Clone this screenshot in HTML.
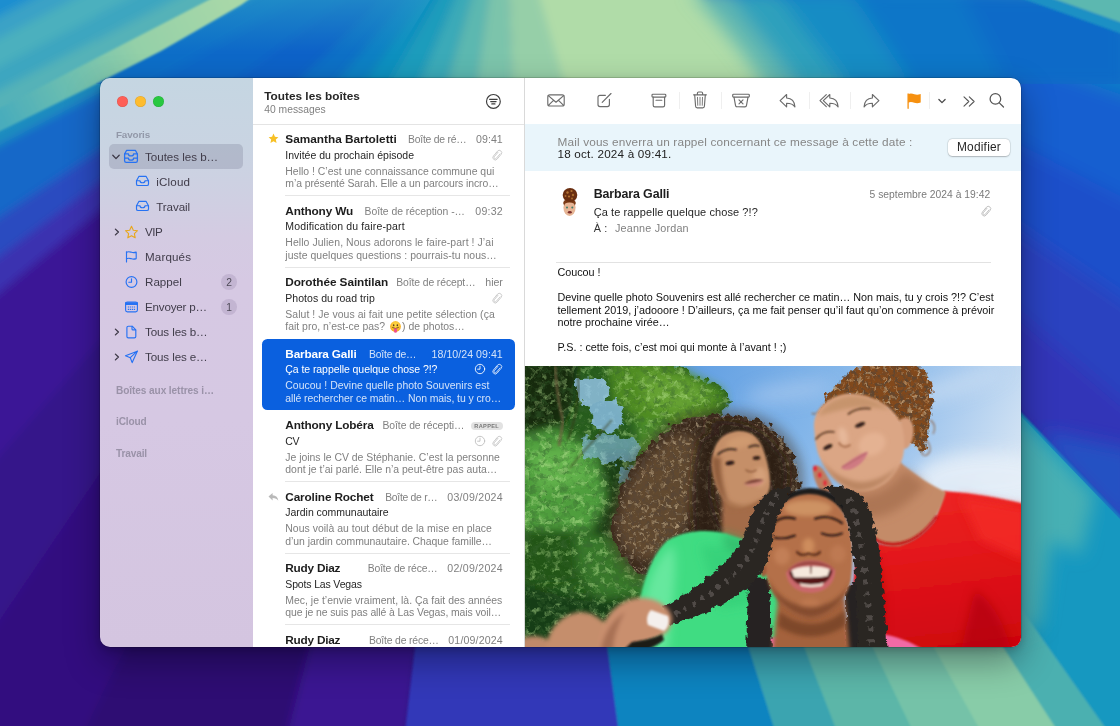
<!DOCTYPE html>
<html lang="fr"><head><meta charset="utf-8"><title>Mail</title>
<style>
html,body{margin:0;padding:0}
body{width:1120px;height:726px;overflow:hidden;position:relative;background:#300d78;font-family:"Liberation Sans",sans-serif;}
.wp{position:absolute;left:0;top:0}
.ui{position:absolute;left:0;top:0;width:1120px;height:726px;will-change:transform;}
.t{position:absolute;white-space:pre;}
.r{position:absolute;}
.i{position:absolute;overflow:visible}
.win{position:absolute;left:100px;top:78px;width:921px;height:569px;border-radius:10px;overflow:hidden;box-shadow:0 0 0 0.5px rgba(0,0,0,.28),0 14px 34px rgba(0,0,20,.38),0 3px 10px rgba(0,0,20,.18);}
.sidebar{position:absolute;left:0;top:0;width:153px;height:569px;background:linear-gradient(180deg,#c5d6e2 0%,#c9d4e2 12%,#ced0e2 20%,#d4cbe2 28%,#d6c9e3 36%,#d6c8e3 60%,#d4c5e0 100%);}
.listbg{position:absolute;left:153px;top:0;width:271px;height:569px;background:#fff;}
.readbg{position:absolute;left:425px;top:0;width:496px;height:569px;background:linear-gradient(180deg,#fff 0,#fff 420px,#cf1414 420px,#cf1414 100%);}
.emo{display:inline-block;vertical-align:-3.5px;margin:0 1.3px 0 1.8px;}
.clipwin{position:absolute;left:100px;top:78px;width:921px;height:569px;border-radius:10px;overflow:hidden;pointer-events:none}
</style></head>
<body>
<svg class="wp" width="1120" height="726" viewBox="0 0 1120 726">
<defs>
<filter id="wb2" x="-5%" y="-5%" width="110%" height="110%"><feGaussianBlur stdDeviation="1.2"/></filter>
<filter id="wb4" x="-5%" y="-5%" width="110%" height="110%"><feGaussianBlur stdDeviation="4"/></filter>
<filter id="wb8" x="-10%" y="-10%" width="120%" height="120%"><feGaussianBlur stdDeviation="9"/></filter>
<filter id="wb16" x="-20%" y="-20%" width="140%" height="140%"><feGaussianBlur stdDeviation="18"/></filter>
</defs>
<rect width="1120" height="726" fill="#2d0b73"/>
<g filter="url(#wb4)">
<polygon points="505,-120 -1070.7,157.8 -1087.2,38.1 -1094.6,-82.5 -1092.8,-203.3 -1082,-323.7 -1062.1,-442.9 -1033.2,-560.3 -995.6,-675.1" fill="#2a98c8" />
<polygon points="505,-120 -956.7,530.8 -1005.7,407.1 -1044.3,279.7 -1072.1,149.6" fill="#4cb0ac" />
<polygon points="505,-120 -907.7,631.2 -934.9,577.6 -960.1,523.1" fill="#1c8cc0" />
<polygon points="505,-120 -821.5,774.7 -868.6,700.5 -911.6,623.7" fill="#1468c8" />
<polygon points="505,-120 -772.8,842.9 -800,805.7 -826.1,767.8" fill="#2a4cc0" />
<polygon points="505,-120 -729.6,897.7 -754.1,867.3 -777.8,836.2" fill="#3a30b0" />
<polygon points="505,-120 -544.7,1087.5 -644,993.5 -734.9,891.2" fill="#3a1896" />
<polygon points="505,-120 -389.7,1206.5 -472.3,1146.8 -551,1082" fill="#36128a" />
<polygon points="505,-120 -196.4,1318.1 -298.6,1263.5 -396.6,1201.8" fill="#33107f" />
<polygon points="505,-120 117.9,1432.5 7.9,1400.8 -99.5,1361.4 -203.9,1314.4" fill="#2d0b73" />
<polygon points="505,-120 323.9,1469.7 216.2,1453.7 109.8,1430.4" fill="#3b1592" />
</g>
<g filter="url(#wb8)">
<polygon points="505,-120 1734.3,904.2 1670.4,976.3 1602.3,1044.4" fill="#3036b8" />
<polygon points="505,-120 1834.6,770.1 1782.8,842.9 1727.1,912.7" fill="#2a42c0" />
<polygon points="505,-120 1933.1,601.4 1883.6,692.1 1828.3,779.3" fill="#1e50ca" />
<polygon points="505,-120 2019.6,395.6 1977.8,505.2 1928.1,611.4" fill="#155ed0" />
<polygon points="505,-120 2065.2,234.5 2043,321 2016,406.2" fill="#0e7cc8" />
<polygon points="505,-120 2098.4,-265 2104.9,-136.8 2101.1,-8.4 2087,119.3 2062.7,245.4" fill="#5cb8b0" />
</g>
<g filter="url(#wb2)">
<polygon points="505,-120 727.7,1464.4 591.5,1477.7 454.7,1479.2 318.3,1469.1" fill="#3038b8" />
<polygon points="505,-120 999.4,1401.7 906.5,1428.8 812.1,1450.2 716.6,1465.9" fill="#0a84c0" />
<polygon points="505,-120 1096.6,1366.6 1043,1386.8 988.8,1405.1" fill="#3aa4b0" />
<polygon points="505,-120 1206.4,1318.1 1146.8,1345.6 1086.2,1370.7" fill="#5cb6a8" />
<polygon points="505,-120 1295.3,1271.2 1246.3,1297.9 1196.3,1322.9" fill="#74c2a8" />
<polygon points="505,-120 1385.8,1215.8 1336.2,1247.1 1285.6,1276.7" fill="#88cca8" />
<polygon points="505,-120 1438.7,1179.3 1407.8,1201 1376.4,1221.9" fill="#4cb0b0" />
<polygon points="505,-120 1618.5,1029 1527,1111 1429.6,1185.8" fill="#1898c0" />
</g>
<clipPath id="cwA"><polygon points="505,-120 1614.4,1032.9 1531.9,1107 1444.3,1175.2 1352.3,1237.2 1256.2,1292.7" fill="#000" /></clipPath>
<clipPath id="cwB"><polygon points="505,-120 2008.5,427.2 1962.7,539.7 1908.4,648.4 1846.1,752.6 1776.1,851.8 1698.7,945.4 1614.4,1032.9" fill="#000" /></clipPath>
<g clip-path="url(#cwA)"><g filter="url(#wb8)">
<polygon points="1000,395 1095,495 1080,555 1052,540 1040,625 1000,640" fill="#4cb2b2" opacity="0.9"/>
</g></g>
<g clip-path="url(#cwB)"><g filter="url(#wb8)">
<polygon points="1135,450 1135,540 1060,460 1040,430" fill="#2258c6" opacity="0.8"/>
</g></g>
<clipPath id="topclip"><rect x="96" y="0" width="1030" height="84"/></clipPath>
<g clip-path="url(#topclip)">
<g filter="url(#wb4)">
<polygon points="505,-120 -31.9,190 -53,150.2 -71.2,108.9 -86.3,66.4 -98.3,23 -107.1,-21.2 -112.6,-66" fill="#0c6ec8"/>
<polygon points="505,-120 9.8,253.1 -12,222.2 -31.9,190" fill="#0b68c8"/>
<polygon points="505,-120 59,310.7 33.5,282.7 9.8,253.1" fill="#0a62c8"/>
<polygon points="505,-120 106.5,354.9 82.2,333.4 59,310.7" fill="#0a70c6"/>
<polygon points="505,-120 149.4,387.9 127.6,371.9 106.5,354.9" fill="#0a80c4"/>
<polygon points="505,-120 195,416.9 171.9,402.9 149.4,387.9" fill="#0c90c0"/>
<polygon points="505,-120 262.7,450.7 228.4,434.9 195,416.9" fill="#1e9cbc"/>
<polygon points="505,-120 334.1,476 298,464.4 262.7,450.7" fill="#3aaab8"/>
<polygon points="505,-120 418.7,494 376.1,486.5 334.1,476" fill="#5cb8b0"/>
<polygon points="505,-120 526.6,499.6 490.6,499.8 454.6,497.9 418.7,494" fill="#7cc4ab"/>
<polygon points="505,-120 675.9,476 626.8,487.9 577,495.8 526.6,499.6" fill="#96cfa8"/>
<polygon points="505,-120 1041.9,190 1013.6,234.6 981.5,276.7 945.9,315.8 907.2,351.8 865.5,384.4 821.2,413.3 774.6,438.3 726.1,459.2 675.9,476" fill="#b0dca8"/>
</g>
<defs><linearGradient id="tg" gradientUnits="userSpaceOnUse" x1="0" y1="0" x2="0" y2="52"><stop offset="0" stop-color="#2a9cc8" stop-opacity="0.6"/><stop offset="1" stop-color="#2a9cc8" stop-opacity="0"/></linearGradient></defs>
<polygon points="96,0 430,0 398,52 96,52" fill="url(#tg)"/>
<g filter="url(#wb8)">
<path d="M690,-10 C715,20 740,45 768,90 L1130,90 L1130,-10 Z" fill="#62b8b0"/>
<path d="M725,-10 C745,20 770,45 800,90 L1130,90 L1130,-10 Z" fill="#2ea0bc"/>
<path d="M775,-10 C795,20 820,50 850,90 L1130,90 L1130,-10 Z" fill="#158cc4"/>
<path d="M850,-10 C870,20 890,50 915,90 L1130,90 L1130,-10 Z" fill="#0c76c8"/>
<path d="M960,-10 L1010,90 L1130,90 L1130,-10 Z" fill="#0a6ac8"/>
</g>
<g filter="url(#wb2)">
<polygon points="1042,-5 1125,24 1125,-5" fill="#5cb8b0"/>
<polygon points="1012,-5 1125,35 1125,24 1042,-5" fill="#1a90c4"/>
</g>
</g>
<g filter="url(#wb4)">
<polygon points="-10,-194.8 330,-371.6 330,-155.6 -10,21.2" fill="#1e8ed0" opacity="1"/>
<polygon points="-10,21.2 330,-155.6 330,-133.6 -10,43.2" fill="#3aa2c6" opacity="1"/>
<polygon points="-10,43.2 330,-133.6 330,-105.6 -10,71.2" fill="#4cb0be" opacity="1"/>
<polygon points="-10,71.2 330,-105.6 330,-81.6 -10,95.2" fill="#3ea6c0" opacity="1"/>
<polygon points="-10,95.2 330,-81.6 330,-46.6 -10,130.2" fill="#54b2b8" opacity="1"/>
</g>
<defs><linearGradient id="gb" gradientUnits="userSpaceOnUse" x1="0" y1="120" x2="230" y2="0"><stop offset="0" stop-color="#48acbc"/><stop offset="0.3" stop-color="#6cbeb0"/><stop offset="0.6" stop-color="#94d0a8"/><stop offset="1" stop-color="#a8d8a8"/></linearGradient></defs>
<g filter="url(#wb2)">
<path d="M-10,136 L88,88 L161,51 L241,5 L262,-10 L228,-10 L-10,113 Z" fill="url(#gb)"/>
</g>
</svg>
<div class="ui">
<div class="win">
<div class="sidebar"></div>
<div class="listbg"></div>
<div class="readbg"></div>
</div>
<div class="r" style="left:117.3px;top:95.5px;width:11px;height:11px;background:#fe5f57;border-radius:50%;box-shadow:inset 0 0 0 0.5px rgba(0,0,0,.12);"></div>
<div class="r" style="left:135.1px;top:95.5px;width:11px;height:11px;background:#febc2e;border-radius:50%;box-shadow:inset 0 0 0 0.5px rgba(0,0,0,.12);"></div>
<div class="r" style="left:152.9px;top:95.5px;width:11px;height:11px;background:#28c840;border-radius:50%;box-shadow:inset 0 0 0 0.5px rgba(0,0,0,.12);"></div>
<div class="t" style="left:116px;top:128.5px;font-size:9.9px;line-height:12px;color:#9298a8;font-weight:bold;letter-spacing:-0.163px;">Favoris</div>
<div class="r" style="left:109px;top:144.3px;width:134px;height:24.7px;background:rgba(60,60,90,0.17);border-radius:5px;"></div>
<div class="t" style="left:145px;top:150px;font-size:11.6px;line-height:14px;color:#403c4a;letter-spacing:-0.021px;">Toutes les b…</div>
<svg class="i" style="left:123.5px;top:149.6px;margin:-0.6px 0 0 -0.6px" width="16" height="15" viewBox="0 0 15 14" fill="none" stroke="#2672f3" stroke-width="1.2" stroke-linejoin="round" stroke-linecap="round"><path d="M3.4 1.2h8.2l1.9 3.6v6.3a1.5 1.5 0 0 1-1.5 1.5H3a1.5 1.5 0 0 1-1.5-1.5V4.8z"/><path d="M1.6 4.6h3.5a2.4 1.9 0 0 0 4.8 0h3.5"/><path d="M1.6 8.6h3.5a2.4 1.9 0 0 0 4.8 0h3.5"/></svg>
<svg class="i" style="left:111px;top:152.6px" width="10" height="8" viewBox="0 0 10 8" fill="none" stroke="#3c3846" stroke-width="1.3" stroke-linecap="round" stroke-linejoin="round"><path d="M1.8 2.3L5 5.6 8.2 2.3"/></svg>
<div class="t" style="left:156.3px;top:175px;font-size:11.6px;line-height:14px;color:#403c4a;letter-spacing:0.171px;">iCloud</div>
<svg class="i" style="left:135.2px;top:174.2px" width="15" height="14" viewBox="0 0 15 14" fill="none" stroke="#2672f3" stroke-width="1.15" stroke-linejoin="round" stroke-linecap="round"><path d="M4 2.3h7l2.5 4.4v3.2a1.6 1.6 0 0 1-1.6 1.6H3.1a1.6 1.6 0 0 1-1.6-1.6V6.7z"/><path d="M1.6 6.7h3.4a2.5 2 0 0 0 5 0h3.4"/></svg>
<div class="t" style="left:156.3px;top:200px;font-size:11.6px;line-height:14px;color:#403c4a;letter-spacing:-0.094px;">Travail</div>
<svg class="i" style="left:135.2px;top:199.1px" width="15" height="14" viewBox="0 0 15 14" fill="none" stroke="#2672f3" stroke-width="1.15" stroke-linejoin="round" stroke-linecap="round"><path d="M4 2.3h7l2.5 4.4v3.2a1.6 1.6 0 0 1-1.6 1.6H3.1a1.6 1.6 0 0 1-1.6-1.6V6.7z"/><path d="M1.6 6.7h3.4a2.5 2 0 0 0 5 0h3.4"/></svg>
<div class="t" style="left:145px;top:225px;font-size:11.6px;line-height:14px;color:#403c4a;letter-spacing:-0.496px;">VIP</div>
<svg class="i" style="left:123.5px;top:224.7px" width="15" height="14" viewBox="0 0 15 14" fill="none" stroke="#e8a71c" stroke-width="1.1" stroke-linejoin="round"><path d="M7.5 1.3l1.8 3.9 4.2.5-3.1 2.9.8 4.2-3.7-2.1-3.7 2.1.8-4.2-3.1-2.9 4.2-.5z"/></svg>
<svg class="i" style="left:112.8px;top:226.7px" width="8" height="10" viewBox="0 0 8 10" fill="none" stroke="#3c3846" stroke-width="1.3" stroke-linecap="round" stroke-linejoin="round"><path d="M2.4 2.1L5.4 5 2.4 7.9"/></svg>
<div class="t" style="left:145px;top:250px;font-size:11.6px;line-height:14px;color:#403c4a;letter-spacing:0.142px;">Marqués</div>
<svg class="i" style="left:123.5px;top:249.8px" width="15" height="14" viewBox="0 0 15 14" fill="none" stroke="#2672f3" stroke-width="1.15" stroke-linejoin="round" stroke-linecap="round"><path d="M2.5 12V1.8"/><path d="M2.5 2.2c2-1 3.6-.3 5 .1 1.6.5 3 .5 4.7-.2v6.5c-1.7.7-3.1.7-4.7.2-1.4-.4-3-1.1-5-.1"/></svg>
<div class="t" style="left:145px;top:275px;font-size:11.6px;line-height:14px;color:#403c4a;letter-spacing:0.008px;">Rappel</div>
<svg class="i" style="left:123.5px;top:274.9px" width="15" height="14" viewBox="0 0 15 14" fill="none" stroke="#2672f3" stroke-width="1.15" stroke-linecap="round" stroke-linejoin="round"><circle cx="7.5" cy="7" r="5.4"/><path d="M7.5 3.7V7.2H4.8"/></svg>
<div class="t" style="left:145px;top:300px;font-size:11.6px;line-height:14px;color:#403c4a;letter-spacing:-0.18px;">Envoyer p…</div>
<svg class="i" style="left:123.5px;top:300.1px" width="15" height="14" viewBox="0 0 15 14" fill="none" stroke="#2672f3" stroke-width="1.15" stroke-linejoin="round"><rect x="1.6" y="2" width="11.8" height="9.9" rx="1.8"/><path d="M1.6 2.8h11.8v1.7H1.6z" fill="#2672f3"/><path d="M3.8 7h7.4M3.8 9.3h7.4" stroke-dasharray="1.3 0.7" stroke-width="1.2"/></svg>
<div class="t" style="left:145px;top:325px;font-size:11.6px;line-height:14px;color:#403c4a;letter-spacing:-0.109px;">Tous les b…</div>
<svg class="i" style="left:123.5px;top:325.1px" width="15" height="14" viewBox="0 0 15 14" fill="none" stroke="#2672f3" stroke-width="1.15" stroke-linejoin="round" stroke-linecap="round"><path d="M4.3 1.2h3.9l3.6 3.7v6.5a1.4 1.4 0 0 1-1.4 1.4H4.3a1.4 1.4 0 0 1-1.4-1.4V2.6a1.4 1.4 0 0 1 1.4-1.4z"/><path d="M8 1.4v2.5a1 1 0 0 0 1 1h2.6"/></svg>
<svg class="i" style="left:112.8px;top:327.1px" width="8" height="10" viewBox="0 0 8 10" fill="none" stroke="#3c3846" stroke-width="1.3" stroke-linecap="round" stroke-linejoin="round"><path d="M2.4 2.1L5.4 5 2.4 7.9"/></svg>
<div class="t" style="left:145px;top:350px;font-size:11.6px;line-height:14px;color:#403c4a;letter-spacing:-0.109px;">Tous les e…</div>
<svg class="i" style="left:123.5px;top:350.2px" width="15" height="14" viewBox="0 0 15 14" fill="none" stroke="#2672f3" stroke-width="1.15" stroke-linejoin="round" stroke-linecap="round"><path d="M13.3 1.2L1.5 5.8l4.8 1.9 1.9 4.9z"/><path d="M13.3 1.2L6.3 7.7"/></svg>
<svg class="i" style="left:112.8px;top:352.2px" width="8" height="10" viewBox="0 0 8 10" fill="none" stroke="#3c3846" stroke-width="1.3" stroke-linecap="round" stroke-linejoin="round"><path d="M2.4 2.1L5.4 5 2.4 7.9"/></svg>
<div class="r" style="left:221.3px;top:274px;width:15.8px;height:15.8px;background:rgba(70,50,100,0.13);border-radius:50%;"></div>
<div class="t" style="left:226.3px;top:276px;font-size:10.3px;line-height:13px;color:#4e4a58;">2</div>
<div class="r" style="left:221.3px;top:299.20000000000005px;width:15.8px;height:15.8px;background:rgba(70,50,100,0.13);border-radius:50%;"></div>
<div class="t" style="left:226.3px;top:301px;font-size:10.3px;line-height:13px;color:#4e4a58;">1</div>
<div class="t" style="left:116px;top:384px;font-size:10.1px;line-height:13px;color:#9a92a8;font-weight:bold;letter-spacing:-0.089px;">Boîtes aux lettres i…</div>
<div class="t" style="left:116px;top:415px;font-size:10.1px;line-height:13px;color:#9a92a8;font-weight:bold;letter-spacing:-0.168px;">iCloud</div>
<div class="t" style="left:116px;top:447px;font-size:10.1px;line-height:13px;color:#9a92a8;font-weight:bold;letter-spacing:-0.143px;">Travail</div>
<div class="t" style="left:264.2px;top:88.5px;font-size:11.8px;line-height:15px;color:#262626;font-weight:bold;letter-spacing:0.015px;">Toutes les boîtes</div>
<div class="t" style="left:264.2px;top:103px;font-size:10.3px;line-height:13px;color:#7f7f7f;letter-spacing:0.023px;">40 messages</div>
<svg class="i" style="left:485px;top:92.5px" width="17" height="17" viewBox="0 0 17 17" fill="none" stroke="#3d3d3d" stroke-width="1.15" stroke-linecap="round"><circle cx="8.4" cy="8.4" r="6.9"/><path d="M4.6 6.3h7.6M5.7 8.6h5.4M6.8 10.9h3.2"/></svg>
<div class="r" style="left:253px;top:124px;width:271px;height:1px;background:#e4e4e4;"></div>
<div class="t" style="left:285.3px;top:131.5px;font-size:11.8px;line-height:15px;color:#1d1d1d;font-weight:bold;letter-spacing:0.003px;">Samantha Bartoletti</div>
<div class="t" style="left:408px;top:133px;font-size:10.4px;line-height:13px;color:#808080;letter-spacing:-0.228px;">Boîte de ré…</div>
<div class="t" style="right:617.2px;top:132.5px;font-size:10.6px;line-height:13px;color:#808080;letter-spacing:0.047px;">09:41</div>
<div class="t" style="left:285.3px;top:148.5px;font-size:10.5px;line-height:13px;color:#262626;letter-spacing:0.012px;">Invitée du prochain épisode</div>
<div class="t" style="left:285.3px;top:165px;font-size:10.45px;line-height:13px;color:#808080;letter-spacing:0.003px;">Hello ! C’est une connaissance commune qui</div>
<div class="t" style="left:285.3px;top:177px;font-size:10.45px;line-height:13px;color:#808080;letter-spacing:-0.083px;">m’a présenté Sarah. Elle a un parcours incro…</div>
<svg class="i" style="left:267.5px;top:133.2px" width="11" height="11" viewBox="0 0 11 11"><path fill="#f7c026" d="M5.5.6l1.45 3.15 3.45.4-2.55 2.35.7 3.4-3.05-1.72-3.05 1.72.7-3.4L.6 4.15l3.45-.4z"/></svg>
<svg class="i" style="left:491.2px;top:148.5px" width="12" height="13" viewBox="0 0 12 13" fill="none" stroke="#c2c2c2" stroke-width="0.75" stroke-linecap="round"><g transform="rotate(40 6 6.5)"><path d="M4.7 3.4v5.6a1.3 1.3 0 0 0 2.6 0V3.4"/><path d="M3.6 4.2v5a2.4 2.4 0 0 0 4.8 0V2.9a2.4 2.4 0 0 0-4.8 0v1.3"/></g></svg>
<div class="r" style="left:285.3px;top:195px;width:225px;height:1px;background:#e6e6e6;"></div>
<div class="t" style="left:285.3px;top:203.5px;font-size:11.8px;line-height:15px;color:#1d1d1d;font-weight:bold;letter-spacing:-0.15px;">Anthony Wu</div>
<div class="t" style="left:364.5px;top:205px;font-size:10.4px;line-height:13px;color:#808080;letter-spacing:-0.028px;">Boîte de réception -…</div>
<div class="t" style="right:617.2px;top:204.5px;font-size:10.6px;line-height:13px;color:#808080;letter-spacing:0.197px;">09:32</div>
<div class="t" style="left:285.3px;top:219.5px;font-size:10.5px;line-height:13px;color:#262626;letter-spacing:0.151px;">Modification du faire-part</div>
<div class="t" style="left:285.3px;top:236px;font-size:10.45px;line-height:13px;color:#808080;letter-spacing:0.073px;">Hello Julien, Nous adorons le faire-part ! J’ai</div>
<div class="t" style="left:285.3px;top:249px;font-size:10.45px;line-height:13px;color:#808080;letter-spacing:0.046px;">juste quelques questions : pourrais-tu nous…</div>
<div class="r" style="left:285.3px;top:266.5px;width:225px;height:1px;background:#e6e6e6;"></div>
<div class="t" style="left:285.3px;top:274.5px;font-size:11.8px;line-height:15px;color:#1d1d1d;font-weight:bold;letter-spacing:-0.082px;">Dorothée Saintilan</div>
<div class="t" style="left:396.2px;top:276px;font-size:10.4px;line-height:13px;color:#808080;letter-spacing:-0.102px;">Boîte de récept…</div>
<div class="t" style="right:617.2px;top:275.5px;font-size:10.6px;line-height:13px;color:#808080;letter-spacing:-0.043px;">hier</div>
<div class="t" style="left:285.3px;top:291.5px;font-size:10.5px;line-height:13px;color:#262626;letter-spacing:0.04px;">Photos du road trip</div>
<div class="t" style="left:285.3px;top:308px;font-size:10.45px;line-height:13px;color:#808080;letter-spacing:0.061px;">Salut ! Je vous ai fait une petite sélection (ça</div>
<div class="t" style="left:285.3px;top:320px;font-size:10.45px;line-height:13px;color:#808080;">fait pro, n’est-ce pas? <svg class="emo" width="11" height="12.5" viewBox="0 0 11 12.5"><defs><radialGradient id="eg" cx="50%" cy="35%" r="65%"><stop offset="0" stop-color="#ffe04a"/><stop offset="1" stop-color="#f5a623"/></radialGradient></defs><circle cx="5.5" cy="5.5" r="5.4" fill="url(#eg)"/><ellipse cx="3.7" cy="4.3" rx="0.75" ry="1.05" fill="#5a3a1a"/><ellipse cx="7.3" cy="4.3" rx="0.75" ry="1.05" fill="#5a3a1a"/><path d="M2.6 6.6q2.9 2 5.8 0" stroke="#5a3a1a" stroke-width="0.8" fill="none" stroke-linecap="round"/><path d="M4 7.6h3v2.6a1.5 1.5 0 0 1-3 0z" fill="#f0508c"/></svg>) de photos…</div>
<svg class="i" style="left:491.2px;top:291.5px" width="12" height="13" viewBox="0 0 12 13" fill="none" stroke="#c2c2c2" stroke-width="0.75" stroke-linecap="round"><g transform="rotate(40 6 6.5)"><path d="M4.7 3.4v5.6a1.3 1.3 0 0 0 2.6 0V3.4"/><path d="M3.6 4.2v5a2.4 2.4 0 0 0 4.8 0V2.9a2.4 2.4 0 0 0-4.8 0v1.3"/></g></svg>
<div class="r" style="left:262px;top:338.8px;width:253px;height:71.4px;background:#0a60df;border-radius:5.5px;"></div>
<div class="t" style="left:285.3px;top:346.5px;font-size:11.8px;line-height:15px;color:#fff;font-weight:bold;letter-spacing:-0.168px;">Barbara Galli</div>
<div class="t" style="left:369px;top:348px;font-size:10.4px;line-height:13px;color:rgba(255,255,255,.82);letter-spacing:-0.207px;">Boîte de…</div>
<div class="t" style="right:617.2px;top:347.5px;font-size:10.6px;line-height:13px;color:rgba(255,255,255,.82);letter-spacing:0.039px;">18/10/24 09:41</div>
<div class="t" style="left:285.3px;top:362.5px;font-size:10.5px;line-height:13px;color:#fff;letter-spacing:-0.066px;">Ça te rappelle quelque chose ?!?</div>
<div class="t" style="left:285.3px;top:379px;font-size:10.45px;line-height:13px;color:rgba(255,255,255,.82);letter-spacing:0.022px;">Coucou ! Devine quelle photo Souvenirs est</div>
<div class="t" style="left:285.3px;top:392px;font-size:10.45px;line-height:13px;color:rgba(255,255,255,.82);letter-spacing:-0.078px;">allé rechercher ce matin… Non mais, tu y cro…</div>
<svg class="i" style="left:491.2px;top:363px" width="12" height="13" viewBox="0 0 12 13" fill="none" stroke="rgba(255,255,255,.92)" stroke-width="0.75" stroke-linecap="round"><g transform="rotate(40 6 6.5)"><path d="M4.7 3.4v5.6a1.3 1.3 0 0 0 2.6 0V3.4"/><path d="M3.6 4.2v5a2.4 2.4 0 0 0 4.8 0V2.9a2.4 2.4 0 0 0-4.8 0v1.3"/></g></svg>
<svg class="i" style="left:473.9px;top:363.2px" width="12" height="12" viewBox="0 0 12 12" fill="none" stroke="rgba(255,255,255,.92)" stroke-width="0.95" stroke-linecap="round" stroke-linejoin="round"><circle cx="6" cy="6" r="4.7"/><path d="M6 3.2V6.2H3.6"/></svg>
<div class="t" style="left:285.3px;top:417.5px;font-size:11.8px;line-height:15px;color:#1d1d1d;font-weight:bold;letter-spacing:-0.157px;">Anthony Lobéra</div>
<div class="t" style="left:382.5px;top:419px;font-size:10.4px;line-height:13px;color:#808080;letter-spacing:-0.084px;">Boîte de récepti…</div>
<div class="t" style="left:285.3px;top:434.5px;font-size:10.5px;line-height:13px;color:#262626;letter-spacing:-0.422px;">CV</div>
<div class="t" style="left:285.3px;top:451px;font-size:10.45px;line-height:13px;color:#808080;letter-spacing:-0.017px;">Je joins le CV de Stéphanie. C’est la personne</div>
<div class="t" style="left:285.3px;top:463px;font-size:10.45px;line-height:13px;color:#808080;letter-spacing:0.005px;">dont je t’ai parlé. Elle n’a peut-être pas auta…</div>
<svg class="i" style="left:491.2px;top:434.5px" width="12" height="13" viewBox="0 0 12 13" fill="none" stroke="#c2c2c2" stroke-width="0.75" stroke-linecap="round"><g transform="rotate(40 6 6.5)"><path d="M4.7 3.4v5.6a1.3 1.3 0 0 0 2.6 0V3.4"/><path d="M3.6 4.2v5a2.4 2.4 0 0 0 4.8 0V2.9a2.4 2.4 0 0 0-4.8 0v1.3"/></g></svg>
<svg class="i" style="left:473.9px;top:434.7px" width="12" height="12" viewBox="0 0 12 12" fill="none" stroke="#c2c2c2" stroke-width="0.95" stroke-linecap="round" stroke-linejoin="round"><circle cx="6" cy="6" r="4.7"/><path d="M6 3.2V6.2H3.6"/></svg>
<div class="r" style="left:471.2px;top:421.9px;width:31.5px;height:7.8px;background:#e2e2e2;border-radius:3.9px;"></div>
<div class="t" style="left:474.3px;top:422.5px;font-size:5.6px;line-height:7px;color:#777;font-weight:bold;letter-spacing:0.35px;">RAPPEL</div>
<div class="r" style="left:285.3px;top:481px;width:225px;height:1px;background:#e6e6e6;"></div>
<div class="t" style="left:285.3px;top:489.5px;font-size:11.8px;line-height:15px;color:#1d1d1d;font-weight:bold;letter-spacing:-0.148px;">Caroline Rochet</div>
<div class="t" style="left:385.2px;top:491px;font-size:10.4px;line-height:13px;color:#808080;letter-spacing:-0.291px;">Boîte de r…</div>
<div class="t" style="right:617.2px;top:490.5px;font-size:10.6px;line-height:13px;color:#808080;letter-spacing:0.247px;">03/09/2024</div>
<div class="t" style="left:285.3px;top:505.5px;font-size:10.5px;line-height:13px;color:#262626;letter-spacing:-0.032px;">Jardin communautaire</div>
<div class="t" style="left:285.3px;top:522px;font-size:10.45px;line-height:13px;color:#808080;letter-spacing:0.025px;">Nous voilà au tout début de la mise en place</div>
<div class="t" style="left:285.3px;top:535px;font-size:10.45px;line-height:13px;color:#808080;letter-spacing:-0.056px;">d’un jardin communautaire. Chaque famille…</div>
<svg class="i" style="left:267.5px;top:491.5px" width="11" height="10" viewBox="0 0 11 10"><path fill="#b9b9b9" d="M4.6.9v2.3c3.4.1 5.4 1.9 5.7 5.5-1.3-1.9-3-2.7-5.7-2.7v2.4L.5 4.6z"/></svg>
<div class="r" style="left:285.3px;top:552.5px;width:225px;height:1px;background:#e6e6e6;"></div>
<div class="t" style="left:285.3px;top:560.5px;font-size:11.8px;line-height:15px;color:#1d1d1d;font-weight:bold;letter-spacing:-0.226px;">Rudy Diaz</div>
<div class="t" style="left:367.8px;top:562px;font-size:10.4px;line-height:13px;color:#808080;letter-spacing:-0.175px;">Boîte de réce…</div>
<div class="t" style="right:617.2px;top:561.5px;font-size:10.6px;line-height:13px;color:#808080;letter-spacing:0.247px;">02/09/2024</div>
<div class="t" style="left:285.3px;top:577.5px;font-size:10.5px;line-height:13px;color:#262626;letter-spacing:-0.154px;">Spots Las Vegas</div>
<div class="t" style="left:285.3px;top:594px;font-size:10.45px;line-height:13px;color:#808080;letter-spacing:0.012px;">Mec, je t’envie vraiment, là. Ça fait des années</div>
<div class="t" style="left:285.3px;top:606px;font-size:10.45px;line-height:13px;color:#808080;letter-spacing:-0.101px;">que je ne suis pas allé à Las Vegas, mais voil…</div>
<div class="r" style="left:285.3px;top:624px;width:225px;height:1px;background:#e6e6e6;"></div>
<div class="t" style="left:285.3px;top:632.5px;font-size:11.8px;line-height:15px;color:#1d1d1d;font-weight:bold;letter-spacing:-0.226px;">Rudy Diaz</div>
<div class="t" style="left:369px;top:634px;font-size:10.4px;line-height:13px;color:#808080;letter-spacing:-0.175px;">Boîte de réce…</div>
<div class="t" style="right:617.2px;top:633.5px;font-size:10.6px;line-height:13px;color:#808080;letter-spacing:0.147px;">01/09/2024</div>
<div class="r" style="left:524px;top:78px;width:1px;height:569px;background:#d9d9d9;"></div>
<svg class="i" style="left:546px;top:93px" width="20" height="15" viewBox="0 0 20 15" fill="none" stroke="#6b6b6b" stroke-width="1.15" stroke-linecap="round" stroke-linejoin="round" ><rect x="1.8" y="1.9" width="16.4" height="11.1" rx="2"/><path d="M2.3 2.6L10 9.2 17.7 2.6M2.4 12.4L7.5 7.3M17.6 12.4L12.5 7.3"/></svg>
<svg class="i" style="left:596px;top:91px" width="18" height="18" viewBox="0 0 18 18" fill="none" stroke="#6b6b6b" stroke-width="1.15" stroke-linecap="round" stroke-linejoin="round" ><path d="M9.4 4.3H4a2 2 0 0 0-2 2v7.3a2 2 0 0 0 2 2h7.4a2 2 0 0 0 2-2V8.3"/><path d="M6.2 11.4L15 2.5"/></svg>
<svg class="i" style="left:650px;top:92px" width="18" height="17" viewBox="0 0 18 17" fill="none" stroke="#6b6b6b" stroke-width="1.15" stroke-linecap="round" stroke-linejoin="round" ><rect x="2" y="2.2" width="13.8" height="2.9" rx="0.9"/><path d="M3.2 5.1v8.1a1.6 1.6 0 0 0 1.6 1.6h8.2a1.6 1.6 0 0 0 1.6-1.6V5.1"/><path d="M6 8.2h5.8"/></svg>
<svg class="i" style="left:691px;top:90px" width="18" height="20" viewBox="0 0 18 20" fill="none" stroke="#6b6b6b" stroke-width="1.15" stroke-linecap="round" stroke-linejoin="round" ><path d="M2.6 4.8h12.8M6.4 4.6V3.2a1.2 1.2 0 0 1 1.2-1.2h2.8a1.2 1.2 0 0 1 1.2 1.2v1.4"/><path d="M3.7 5l.9 11.3a1.6 1.6 0 0 0 1.6 1.5h5.6a1.6 1.6 0 0 0 1.6-1.5L14.3 5"/><path d="M9 7.3v8M6.5 7.3l.25 8M11.5 7.3l-.25 8" stroke-width="0.9"/></svg>
<svg class="i" style="left:731px;top:92px" width="20" height="17" viewBox="0 0 20 17" fill="none" stroke="#6b6b6b" stroke-width="1.15" stroke-linecap="round" stroke-linejoin="round" ><rect x="1.7" y="2.2" width="16.6" height="2.9" rx="0.9"/><path d="M3 5.2l1.5 8.2a1.6 1.6 0 0 0 1.6 1.4h7.8a1.6 1.6 0 0 0 1.6-1.4L17 5.2"/><path d="M8 7.9l4 4M12 7.9l-4 4"/></svg>
<svg class="i" style="left:778px;top:92px" width="20" height="17" viewBox="0 0 20 17" fill="none" stroke="#6b6b6b" stroke-width="1.15" stroke-linecap="round" stroke-linejoin="round" ><path d="M8.6 2.5L2.1 8.6l6.5 6.2v-3.6c4 0 6.6 1 8.3 3.7-.3-5.5-3.4-8.7-8.3-8.9z"/></svg>
<svg class="i" style="left:818px;top:92px" width="23" height="17" viewBox="0 0 23 17" fill="none" stroke="#6b6b6b" stroke-width="1.15" stroke-linecap="round" stroke-linejoin="round" ><path d="M11.8 2.5L5.3 8.6l6.5 6.2v-3.6c4 0 6.6 1 8.3 3.7-.3-5.5-3.4-8.7-8.3-8.9z"/><path d="M8.3 2.6L2 8.6l6.3 6.1"/></svg>
<svg class="i" style="left:860.5px;top:92px" width="20" height="17" viewBox="0 0 20 17" fill="none" stroke="#6b6b6b" stroke-width="1.15" stroke-linecap="round" stroke-linejoin="round" ><path d="M11.4 2.5l6.5 6.1-6.5 6.2v-3.6c-4 0-6.6 1-8.3 3.7.3-5.5 3.4-8.7 8.3-8.9z"/></svg>
<svg class="i" style="left:905px;top:91px" width="18" height="19" viewBox="0 0 18 19"><path d="M3.1 17.3V3" stroke="#f6900f" stroke-width="1.3" stroke-linecap="round" fill="none"/><path fill="#f6900f" d="M3.1 3.1c2.4-1.1 4.4-.5 6.2.1 2 .6 3.9.7 6.4-.3v8.6c-2.5 1-4.4.9-6.4.3-1.8-.6-3.8-1.2-6.2-.1z"/></svg>
<svg class="i" style="left:936.5px;top:97px" width="10" height="8" viewBox="0 0 10 8" fill="none" stroke="#4a4a4a" stroke-width="1.3" stroke-linecap="round" stroke-linejoin="round" ><path d="M1.9 2.5L5 5.6 8.1 2.5"/></svg>
<svg class="i" style="left:961px;top:94px" width="16" height="15" viewBox="0 0 16 15" fill="none" stroke="#555" stroke-width="1.1" stroke-linecap="round" stroke-linejoin="round" ><path d="M3 2.9L7.8 7.5 3 12.1M8.3 2.9L13.1 7.5 8.3 12.1"/></svg>
<svg class="i" style="left:987px;top:91px" width="19" height="19" viewBox="0 0 19 19" fill="none" stroke="#555" stroke-width="1.25" stroke-linecap="round" stroke-linejoin="round" ><circle cx="8.4" cy="7.9" r="5.3"/><path d="M12.3 11.9L16.5 16"/></svg>
<div class="r" style="left:679.2px;top:92px;width:1px;height:17px;background:#efefef;"></div>
<div class="r" style="left:720.6px;top:92px;width:1px;height:17px;background:#efefef;"></div>
<div class="r" style="left:808.6px;top:92px;width:1px;height:17px;background:#efefef;"></div>
<div class="r" style="left:850.3px;top:92px;width:1px;height:17px;background:#efefef;"></div>
<div class="r" style="left:929.4px;top:92px;width:1px;height:17px;background:#efefef;"></div>
<div class="r" style="left:525px;top:124.2px;width:496px;height:46.4px;background:#e9f5fb;"></div>
<div class="t" style="left:557.5px;top:134.5px;font-size:11.8px;line-height:15px;color:#868686;letter-spacing:0.147px;">Mail vous enverra un rappel concernant ce message à cette date :</div>
<div class="t" style="left:557.5px;top:146px;font-size:11.7px;line-height:15px;color:#222;letter-spacing:0.2px;">18 oct. 2024 à 09:41.</div>
<div class="r" style="left:947.5px;top:138.8px;width:62.5px;height:17.4px;background:#fff;border-radius:4.5px;box-shadow:0 0 0 0.5px rgba(0,0,0,.10),0 0.5px 1.5px rgba(0,0,0,.22);"></div>
<div class="t" style="left:957px;top:139.5px;font-size:11.9px;line-height:15px;color:#262626;letter-spacing:0.213px;">Modifier</div>
<svg class="i" style="left:559px;top:186px" width="22" height="32" viewBox="0 0 22 32"><ellipse cx="10.5" cy="21.6" rx="6.1" ry="8.3" fill="#e6b595"/><ellipse cx="10.5" cy="17" rx="6.3" ry="4" fill="#7a3a16"/><ellipse cx="11" cy="9" rx="7.3" ry="7" fill="#6a2e10"/><circle cx="8.5" cy="6.5" r="1.2" fill="#b47434"/><circle cx="12.5" cy="5" r="1.1" fill="#b47434"/><circle cx="14" cy="9" r="1.2" fill="#a86a2e"/><circle cx="10" cy="10.5" r="1.1" fill="#b47434"/><circle cx="6.5" cy="10" r="1" fill="#a86a2e"/><circle cx="13" cy="12.5" r="1" fill="#a86a2e"/><ellipse cx="10.5" cy="19" rx="5" ry="2.5" fill="#e6b595"/><circle cx="8" cy="21.5" r="1" fill="#3c7a68"/><circle cx="13.3" cy="21.5" r="1" fill="#3c7a68"/><ellipse cx="10.8" cy="26.2" rx="2" ry="1.3" fill="#7a2a28"/></svg>
<div class="t" style="left:593.7px;top:186px;font-size:12.4px;line-height:16px;color:#1d1d1d;font-weight:bold;letter-spacing:-0.107px;">Barbara Galli</div>
<div class="t" style="left:593.7px;top:205px;font-size:11px;line-height:14px;color:#262626;letter-spacing:0.087px;">Ça te rappelle quelque chose ?!?</div>
<div class="t" style="left:593.7px;top:221px;font-size:10.8px;line-height:14px;color:#333;letter-spacing:0.2px;">À :</div>
<div class="t" style="left:615px;top:221px;font-size:10.8px;line-height:14px;color:#808080;letter-spacing:0.178px;">Jeanne Jordan</div>
<div class="t" style="right:129.8px;top:188px;font-size:10.3px;line-height:13px;color:#7a7a7a;letter-spacing:0.019px;">5 septembre 2024 à 19:42</div>
<svg class="i" style="left:979.5px;top:204.8px" width="12" height="13" viewBox="0 0 12 13" fill="none" stroke="#b5b5b5" stroke-width="0.75" stroke-linecap="round"><g transform="rotate(40 6 6.5)"><path d="M4.7 3.4v5.6a1.3 1.3 0 0 0 2.6 0V3.4"/><path d="M3.6 4.2v5a2.4 2.4 0 0 0 4.8 0V2.9a2.4 2.4 0 0 0-4.8 0v1.3"/></g></svg>
<div class="r" style="left:555.5px;top:262px;width:435.5px;height:1px;background:#e2e2e2;"></div>
<div class="t" style="left:557.4px;top:265px;font-size:10.8px;line-height:14px;color:#111;">Coucou !</div>
<div class="t" style="left:557.4px;top:290px;font-size:10.8px;line-height:14px;color:#111;">Devine quelle photo Souvenirs est allé rechercher ce matin… Non mais, tu y crois ?!? C’est</div>
<div class="t" style="left:557.4px;top:303px;font-size:10.8px;line-height:14px;color:#111;">tellement 2019, j’adooore ! D’ailleurs, ça me fait penser qu’il faut qu’on commence à prévoir</div>
<div class="t" style="left:557.4px;top:315px;font-size:10.8px;line-height:14px;color:#111;">notre prochaine virée…</div>
<div class="t" style="left:557.4px;top:340px;font-size:10.8px;line-height:14px;color:#111;">P.S. : cette fois, c’est moi qui monte à l’avant ! ;)</div>
<svg class="i" style="left:525px;top:366px" width="496" height="281" viewBox="525 366 496 281">
<defs>
<clipPath id="pclip"><path d="M525,366H1021V637.3a9.7,9.7 0 0 1 -9.7,9.7H525Z"/></clipPath>
<linearGradient id="sky" gradientUnits="userSpaceOnUse" x1="680" y1="366" x2="1010" y2="520">
<stop offset="0" stop-color="#609ee2"/><stop offset="0.38" stop-color="#82b5e9"/><stop offset="0.7" stop-color="#a6c9ee"/><stop offset="1" stop-color="#dde9f5"/>
</linearGradient>
<filter id="pb1" x="-10%" y="-10%" width="120%" height="120%"><feGaussianBlur stdDeviation="1"/></filter>
<filter id="pb2" x="-10%" y="-10%" width="120%" height="120%"><feGaussianBlur stdDeviation="2.2"/></filter>
<filter id="pb5" x="-20%" y="-20%" width="140%" height="140%"><feGaussianBlur stdDeviation="5"/></filter>
<filter id="pb9" x="-30%" y="-30%" width="160%" height="160%"><feGaussianBlur stdDeviation="9"/></filter>
<filter id="rough" x="-10%" y="-10%" width="120%" height="120%">
<feTurbulence type="fractalNoise" baseFrequency="0.11" numOctaves="3" seed="4" result="n"/>
<feDisplacementMap in="SourceGraphic" in2="n" scale="13" xChannelSelector="R" yChannelSelector="G"/>
<feGaussianBlur stdDeviation="0.7"/>
</filter>
<filter id="rough2" x="-10%" y="-10%" width="120%" height="120%">
<feTurbulence type="fractalNoise" baseFrequency="0.2" numOctaves="2" seed="9" result="n"/>
<feDisplacementMap in="SourceGraphic" in2="n" scale="7" xChannelSelector="R" yChannelSelector="G"/>
<feGaussianBlur stdDeviation="0.5"/>
</filter>
<filter id="leaf" x="0" y="0" width="100%" height="100%">
<feTurbulence type="fractalNoise" baseFrequency="0.13 0.16" numOctaves="3" seed="7" result="n"/>
<feColorMatrix in="n" type="matrix" values="0 0 0 0 0.04  0 0 0 0 0.13  0 0 0 0 0.03  3.5 0 0 0 -1.6" result="d"/>
<feColorMatrix in="n" type="matrix" values="0 0 0 0 0.5  0 0 0 0 0.8  0 0 0 0 0.3  0 3.5 0 0 -1.85" result="l"/>
<feMerge result="m"><feMergeNode in="d"/><feMergeNode in="l"/></feMerge>
<feComposite in="m" in2="SourceGraphic" operator="in"/>
</filter>
<filter id="curl" x="0" y="0" width="100%" height="100%">
<feTurbulence type="fractalNoise" baseFrequency="0.24" numOctaves="2" seed="3" result="n"/>
<feColorMatrix in="n" type="matrix" values="0 0 0 0 0.09  0 0 0 0 0.06  0 0 0 0 0.04  4 0 0 0 -1.7" result="d"/>
<feColorMatrix in="n" type="matrix" values="0 0 0 0 0.7  0 0 0 0 0.56  0 0 0 0 0.36  0 3.2 0 0 -1.78" result="l"/>
<feMerge result="m"><feMergeNode in="d"/><feMergeNode in="l"/></feMerge>
<feComposite in="m" in2="SourceGraphic" operator="in"/>
</filter>
<linearGradient id="redg" gradientUnits="userSpaceOnUse" x1="940" y1="495" x2="960" y2="647"><stop offset="0" stop-color="#ec2422"/><stop offset="0.5" stop-color="#e01418"/><stop offset="1" stop-color="#cf0610"/></linearGradient>
</defs>
<g clip-path="url(#pclip)">
<rect x="525" y="366" width="496" height="281" fill="url(#sky)"/>
<!-- clouds -->
<g filter="url(#pb9)" opacity="0.9">
<ellipse cx="985" cy="478" rx="70" ry="26" fill="#e6eff8"/>
<ellipse cx="960" cy="385" rx="50" ry="9" fill="#c4daf2" transform="rotate(-18 960 385)"/>
<ellipse cx="790" cy="392" rx="45" ry="8" fill="#a4c6ee" transform="rotate(-8 790 392)"/>
<ellipse cx="930" cy="500" rx="60" ry="14" fill="#dfeaf6"/>
</g>
<!-- trees -->
<g filter="url(#rough)">
<path d="M520,360 L668,360 L690,374 L722,388 L731,402 L714,418 L690,440 L660,520 L655,655 L520,655 Z" fill="#285c1d"/>
</g>
<g filter="url(#pb5)">
<path d="M520,360 L578,360 L576,400 L556,436 L520,440 Z" fill="#142c0e"/>
<path d="M575,455 L630,452 L640,520 L612,545 L590,530 Z" fill="#1a4014"/>
<path d="M520,436 L556,428 L596,452 L606,500 L590,530 L520,528 Z" fill="#4f9e3e"/>
<path d="M530,450 L575,448 L590,480 L540,490 Z" fill="#66b650" opacity="0.8"/>
<path d="M608,360 L668,362 L722,390 L726,404 L690,428 L640,424 L612,400 Z" fill="#4f8c24"/>
<path d="M640,372 L690,380 L712,398 L680,415 L645,405 Z" fill="#6aa634" opacity="0.8"/>
<path d="M636,420 L668,422 L660,455 L638,458 Z" fill="#4c8c2c"/>
<path d="M520,530 L590,532 L600,560 L570,585 L520,585 Z" fill="#245419"/>
<path d="M575,535 L640,540 L646,592 L600,598 L578,570 Z" fill="#37782c"/>
<path d="M520,585 L600,600 L650,598 L650,655 L520,655 Z" fill="#183c12"/>
</g>
<g filter="url(#rough2)" opacity="0.5">
<path d="M520,360 L668,360 L690,374 L722,388 L731,402 L714,418 L690,440 L660,520 L655,655 L520,655 Z" fill="#fff" filter="url(#leaf)"/>
</g>
<g filter="url(#rough)" opacity="0.8">
<path d="M574,380 L600,377 L611,392 L600,406 L582,404 Z" fill="#98c8f0"/>
<path d="M588,403 L616,400 L624,418 L616,432 L596,430 Z" fill="#8ec2ee"/>
<path d="M582,438 L610,434 L640,442 L638,460 L606,463 L584,456 Z" fill="#8abfec" opacity="0.75"/>
<path d="M620,466 L634,470 L630,484 L618,480 Z" fill="#86bcea" opacity="0.7"/>
</g>
<path d="M555,366 C557,395 560,410 563,420 C562,430 560,438 559,446" stroke="#6e6040" stroke-width="2.6" opacity="0.8" fill="none" filter="url(#pb1)"/>
<path d="M612,420 C598,436 582,452 570,468" stroke="#3a4020" stroke-width="2" opacity="0.55" fill="none" filter="url(#pb1)"/>
<path d="M578,376 C580,395 575,420 568,440" stroke="#2e3418" stroke-width="2.2" opacity="0.6" fill="none" filter="url(#pb1)"/>
<!-- person 2 -->
<!-- hair -->
<g filter="url(#rough)">
<path d="M822,412 C826,392 842,374 862,366 L915,360 C930,372 936,392 932,412 C930,430 928,445 922,452 C915,450 908,440 905,425 L880,405 L850,396 Z" fill="#82491f"/>
</g>
<g filter="url(#rough2)" opacity="0.7"><path d="M822,412 C826,392 842,374 862,366 L915,360 C930,372 936,392 932,412 C930,430 928,445 922,452 C915,450 908,440 905,425 L880,405 L850,396 Z" fill="#fff" filter="url(#curl)"/></g>
<g fill="none" stroke="#8a5228" stroke-width="1.1" opacity="0.8" filter="url(#pb1)">
<path d="M836,398 c-6,2 -12,6 -16,12 c-3,4 -6,5 -8,3"/>
<path d="M830,404 c-5,3 -9,8 -12,14"/>
<path d="M926,440 c4,4 6,10 2,14 c-3,3 -7,1 -6,-3"/>
<path d="M930,420 c5,3 6,9 3,14"/>
<path d="M870,368 c-4,-3 -10,-2 -14,2"/>
</g>
<!-- red shirt -->
<g filter="url(#pb1)">
<path d="M944,491 C975,493 1000,498 1025,504 L1025,655 L850,655 C850,620 852,580 860,535 C885,552 915,548 935,520 Z" fill="url(#redg)"/>
</g>
<g filter="url(#pb5)">
<path d="M866,540 C880,560 890,600 880,655 L860,655 C858,610 860,570 866,540 Z" fill="#b8100f" opacity="0.8"/>
<path d="M960,496 L1025,508 L1025,560 L980,540 Z" fill="#f42a26" opacity="0.8"/>
<path d="M975,590 C990,600 1005,620 1012,655 L960,655 C965,630 970,610 975,590 Z" fill="#b4040c" opacity="0.75"/>
</g>
<!-- neck -->
<g filter="url(#pb1)">
<path d="M842,486 L900,462 C915,475 932,486 946,492 C940,515 925,538 900,546 C885,548 872,540 866,530 C860,515 850,500 842,486 Z" fill="#c48b68"/>
</g>
<g filter="url(#pb5)">
<path d="M850,492 C870,500 890,490 905,470 L925,485 C905,510 880,520 862,518 Z" fill="#a87050" opacity="0.8"/>
</g>
<!-- collar line -->
<path d="M866,532 C885,552 915,548 937,516" stroke="#c41414" stroke-width="3" fill="none" filter="url(#pb1)"/>
<!-- face -->
<g filter="url(#pb1)">
<path d="M900,420 C907,414 914,420 913.5,432 C913,442 909,449 904,449 Z" fill="#d49c7a"/>
<path d="M814.3,430 C813,420 816,412 822,406 C830,398 838,395 846,394 C858,393 872,397 882,403 C892,409 899,417 902,426 C905,438 905,450 902,460 C898,470 892,478 884,484 C876,489 868,492 859,491 C849,490 841,485 834,478 C828,472 823,465 820,458 C816,450 815,440 814.3,430 Z" fill="#dba685"/>
</g>
<g filter="url(#pb2)">
<path d="M818,416 C826,402 840,396 852,396 C866,396 880,402 890,410 C880,408 866,406 852,408 C838,410 826,414 818,416 Z" fill="#c4926a" opacity="0.9"/>
<ellipse cx="872" cy="444" rx="14" ry="11" fill="#e6b494" opacity="0.9" transform="rotate(-25 872 444)"/>
<ellipse cx="843" cy="436" rx="4.5" ry="9" fill="#e8ba9c" opacity="0.9" transform="rotate(-14 843 436)"/>
<path d="M820,458 C826,472 838,486 856,491 C872,492 888,482 900,464 C890,474 876,482 860,482 C842,480 828,470 820,458 Z" fill="#b8835e" opacity="0.9"/>
</g>
<g filter="url(#pb1)">
<path d="M816,439 C821,433 828,431 834,432" stroke="#5e3c26" stroke-width="1.7" fill="none" stroke-linecap="round"/>
<path d="M848.3,414 C855,409 863,408 870,408.6" stroke="#5e3c26" stroke-width="1.7" fill="none" stroke-linecap="round"/>
<ellipse cx="827.8" cy="447" rx="5" ry="2" fill="#2e1c14" transform="rotate(-28 827.8 447)"/>
<ellipse cx="860" cy="424.8" rx="5.5" ry="2" fill="#2e1c14" transform="rotate(-22 860 424.8)"/>
<path d="M839,443 C841,447 846,448 850,445" stroke="#a8704e" stroke-width="1.8" fill="none" stroke-linecap="round"/>
<path d="M841,467.7 C848,462 858,454 868,451.6 C866,458 862,464 854,468 C848,471 843,470 841,467.7 Z" fill="#cf7a82"/>
<path d="M842,467 C850,463 860,457 867,452.5" stroke="#a85660" stroke-width="1" fill="none"/>
</g>
<!-- hand with red nails -->
<g filter="url(#pb1)">
<path d="M813,468 C816,463 822,466 826,474 C830,480 833,486 835,492 L822,494 C818,488 812,476 813,468 Z" fill="#bc7e60"/>
<ellipse cx="815.2" cy="468.6" rx="2.2" ry="3" fill="#e02838"/>
<ellipse cx="819.7" cy="475" rx="2.1" ry="3" fill="#e02838"/>
<ellipse cx="825" cy="483" rx="2" ry="3" fill="#e02838"/>
</g>
<!-- person 1 -->
<path d="M614,522 C618,488 638,452 663,432 C690,412 735,408 765,424 C790,438 801,465 798,490 C796,505 782,520 770,530 L735,560 C700,578 652,588 632,568 C618,552 612,537 614,522 Z" fill="#4a3826" opacity="0.45" filter="url(#pb5)" transform="translate(705 490) scale(1.06) translate(-705 -490)"/>
<g filter="url(#rough)">
<path d="M614,522 C618,488 638,452 663,432 C690,412 735,408 765,424 C790,438 801,465 798,490 C796,505 782,520 770,530 L735,560 C700,578 652,588 632,568 C618,552 612,537 614,522 Z" fill="#3a2a1c"/>
</g>
<g filter="url(#pb5)">
<path d="M618,520 C625,485 645,455 670,438 C690,428 705,440 700,470 C695,510 680,550 650,560 C628,560 616,540 618,520 Z" fill="#7a5e3c" opacity="0.6"/>
</g>
<g filter="url(#rough2)" opacity="0.6"><path d="M614,522 C618,488 638,452 663,432 C690,412 735,408 765,424 C790,438 801,465 798,490 C796,505 782,520 770,530 L735,560 C700,578 652,588 632,568 C618,552 612,537 614,522 Z" fill="#fff" filter="url(#curl)"/></g>
<g filter="url(#pb5)">
<path d="M700,425 C730,415 765,425 785,460 C790,480 785,500 775,510 C770,480 760,450 735,435 Z" fill="#2a1e14" opacity="0.75"/>
<path d="M660,540 C690,560 720,540 735,520 L735,560 L690,575 Z" fill="#2e2016" opacity="0.7"/>
<path d="M700,440 C715,430 730,432 728,436 C715,445 708,470 712,500 C716,520 725,535 735,545 L700,560 C690,520 690,470 700,440 Z" fill="#2a1e14" opacity="0.75"/>
</g>
<!-- neck -->
<path d="M722,495 L764,496 L762,545 L722,545 Z" fill="#a46c48" filter="url(#pb2)"/>
<!-- face -->
<g filter="url(#pb1)">
<path d="M737,431 C748,430 758,436 762,446 C766,456 770,470 770,484 C770,492 766,497 760,500 C752,506 740,510 730,506 C720,498 714,484 712,468 C711,456 714,446 720,439 C725,434 731,432 737,431 Z" fill="#c58f68"/>
</g>
<g filter="url(#pb2)">
<ellipse cx="740" cy="442" rx="14" ry="6" fill="#cf9a70" transform="rotate(-12 740 442)"/>
<ellipse cx="760" cy="477" rx="7" ry="10" fill="#d6a27c" opacity="0.9"/>
<path d="M712,456 C712,476 718,496 730,507 C724,492 720,474 721,458 Z" fill="#8a5636" opacity="0.9"/>
<path d="M728,500 C738,508 752,506 762,498 L762,506 L730,510 Z" fill="#a06a46" opacity="0.8"/>
</g>
<g filter="url(#pb1)">
<path d="M718,454.5 C723,450 730,448.5 736,449.6" stroke="#33211a" stroke-width="1.8" fill="none" stroke-linecap="round"/>
<path d="M749,447 C753,445 756,445 759,446" stroke="#33211a" stroke-width="1.7" fill="none" stroke-linecap="round"/>
<ellipse cx="730" cy="463" rx="4.5" ry="2" fill="#2a1912" transform="rotate(-8 730 463)"/>
<ellipse cx="756.5" cy="458" rx="3.8" ry="1.8" fill="#2a1912" transform="rotate(-5 756 458)"/>
<path d="M746,470 C748,472 753,472.5 756,470" stroke="#8e5a3c" stroke-width="1.6" fill="none" stroke-linecap="round"/>
<path d="M744,484 C748,480 758,478 764,480 C760,482 752,484 744,484 Z" fill="#7e4238"/>
<path d="M744,484.5 C752,484 760,482 764,480.5 C762,486 752,489 744,484.5 Z" fill="#cf8878"/>
</g>
<!-- green shirt -->
<g filter="url(#pb1)">
<path d="M636,655 C634,610 645,560 668,540 C690,528 715,530 730,535 L760,545 L790,560 L792,655 Z" fill="#3fdc82"/>
</g>
<g filter="url(#pb5)">
<path d="M640,650 C640,600 650,565 672,545 C680,560 672,600 668,650 Z" fill="#66e89e"/>
<path d="M700,545 L760,550 L770,600 L720,610 Z" fill="#34cf78" opacity="0.7"/>
<path d="M722,532 L760,545 L758,560 L725,548 Z" fill="#2cae62" opacity="0.6"/>
</g>

<!-- person 3 -->
<!-- pink shirt -->
<path d="M740,655 C750,642 770,636 790,636 L840,632 C870,630 905,634 930,655 Z" fill="#f26aa6" filter="url(#pb1)"/>
<!-- back braids -->
<g filter="url(#rough2)">
<path d="M748,585 C752,575 766,575 770,585 L772,655 L746,655 Z" fill="#262220"/>
<path d="M846,590 C850,580 864,582 868,592 L872,655 L846,655 Z" fill="#262220"/>
</g>
<!-- neck -->
<path d="M778,598 L845,598 L850,655 L772,655 Z" fill="#a4623c" filter="url(#pb2)"/>
<path d="M780,612 C800,628 825,628 845,610 L846,625 C825,640 798,640 778,626 Z" fill="#6e3c22" opacity="0.7" filter="url(#pb2)"/>
<!-- hair cap -->
<g filter="url(#pb1)">
<path d="M762,545 C760,515 780,490 809,488 C838,488 858,508 856,545 L850,530 C846,510 830,499 808,499 C788,500 772,514 768,538 Z" fill="#1e1b1a"/>
</g>
<!-- face -->
<g filter="url(#pb1)">
<path d="M765.7,541 C766,516 784,495 808.4,494 C834,494 850,512 852.2,545 C853,560 852,572 851,580 C848,592 844,598 839.8,602 C832,612 822,617 810.6,617.5 C798,617 786,610 778,600 C772,592 768,584 766,574 C765,564 765,552 765.7,541 Z" fill="#b4704a"/>
<ellipse cx="763.5" cy="570" rx="3" ry="7" fill="#a05c3a"/>
</g>
<g filter="url(#pb2)">
<ellipse cx="808" cy="508" rx="24" ry="8" fill="#cf9464" opacity="0.95"/>
<ellipse cx="782" cy="556" rx="8" ry="9" fill="#c6835a" opacity="0.8"/>
<ellipse cx="838" cy="554" rx="8" ry="9" fill="#c07c54" opacity="0.8"/>
<ellipse cx="808.4" cy="546" rx="6" ry="8" fill="#d0905e" opacity="0.9"/>
<ellipse cx="810" cy="604" rx="10" ry="5" fill="#c07a52" opacity="0.8"/>
<path d="M767,578 C772,598 788,614 810,618 C830,616 844,602 851,580 C844,596 830,606 811,607 C792,606 776,596 767,578 Z" fill="#7c4528" opacity="0.85"/>
<path d="M766,540 C767,525 774,512 784,504 C776,516 772,528 772,545 Z" fill="#8a5030" opacity="0.8"/>
</g>
<g filter="url(#pb1)">
<path d="M772.5,523.2 C780,517.5 788,516.5 795,518.7" stroke="#251610" stroke-width="2.2" fill="none" stroke-linecap="round"/>
<path d="M815.1,518.7 C824,515.5 834,517.5 842,523.2" stroke="#251610" stroke-width="2.2" fill="none" stroke-linecap="round"/>
<path d="M774.7,537.8 C781,539 789,538 795,535.5" stroke="#2a1812" stroke-width="1.9" fill="none" stroke-linecap="round"/>
<path d="M821.8,533.3 C828,536 836,536 842,533.3" stroke="#2a1812" stroke-width="1.9" fill="none" stroke-linecap="round"/>
<path d="M797,552 C800,556 805,555 808.4,553.5 C812,555 817,556 820,552" stroke="#5e301c" stroke-width="2.2" fill="none" stroke-linecap="round"/>
</g>
<!-- mouth -->
<g filter="url(#pb1)">
<path d="M786,572.6 C792,563 802,560 810.6,560.2 C820,560 830,563 835.3,570.3 C835,584 825,593 810.6,592.8 C797,593 787,585 786,572.6 Z" fill="#c9686a"/>
<path d="M786,572.6 C793,564 802,561 810.6,561.2 C820,561 829,564 835.3,570.3 C828,566.5 819,565 810.6,565 C802,565 793,567 786,572.6 Z" fill="#9c4a44"/>
<path d="M789,572 C797,566.5 824,566 832.5,570.5 C831,580 823,586.5 810.6,586.5 C799,586.5 791,581 789,572 Z" fill="#541618"/>
<path d="M791.5,570.5 C799,565.5 822,565.2 829.7,569.5 L827.5,576 C820,577.5 802,578 794,577.2 Z" fill="#f5e8dc"/>
<path d="M799.4,583 C805,585 818,585 824,582.5 L822,586 C816,587.5 806,587.5 801,586 Z" fill="#efdccf"/>
<path d="M810,566 L811.6,566 L811.3,574 L810.3,574 Z" fill="#5a201c"/>
</g>
<!-- front braids -->
<g filter="url(#rough2)">
<path d="M792,488 C780,486 770,489 764,496 C755,506 749,518 745,532 C740,546 732,556 722,565 C706,580 688,594 663,607 L669,625 C700,617 728,604 750,586 C762,574 769,560 771,546 C774,532 777,518 783,506 C787,498 791,492 792,488 Z" fill="#2a2624"/>
<path d="M824,488 C838,485 852,488 861,496 C871,509 877,530 880,556 C883,580 885,610 888,655 L858,655 C858,620 857,590 854,562 C852,540 849,526 844,514 C839,503 832,494 824,488 Z" fill="#2a2624"/>
</g>
<g filter="url(#rough2)" opacity="0.6">
<path d="M778,494 C766,510 760,530 752,550 C738,574 710,598 670,616" stroke="#6a6460" stroke-width="5" fill="none" stroke-dasharray="4 6"/>
<path d="M848,498 C860,520 866,570 872,650" stroke="#6a6460" stroke-width="6" fill="none" stroke-dasharray="5 7"/>
</g>
<!-- hand -->
<g filter="url(#pb2)">
<path d="M520,640 C528,634 545,634 552,644 L556,655 L520,655 Z" fill="#c08a6a"/>
<path d="M546,655 C544,632 560,614 580,612 C598,612 612,625 620,655 Z" fill="#c58e6c"/>
<path d="M598,655 C596,625 612,602 636,598 C655,596 670,606 672,618 C672,632 660,640 640,644 L625,655 Z" fill="#c98f6e"/>
<path d="M600,655 C602,635 612,620 625,612 C615,630 612,645 614,655 Z" fill="#9a6448" opacity="0.7"/>
</g>
<path d="M651,610 L668,616 C670,622 668,628 664,631 L648,625 C646,620 647,614 651,610 Z" fill="#f4efec" filter="url(#pb1)"/>
<path d="M632,642 C645,640 655,638 662,634 L664,640 C655,648 640,652 628,655 L618,655 Z" fill="#1e1a18" filter="url(#pb1)"/>

</g>
</svg>

</div>
</body></html>
